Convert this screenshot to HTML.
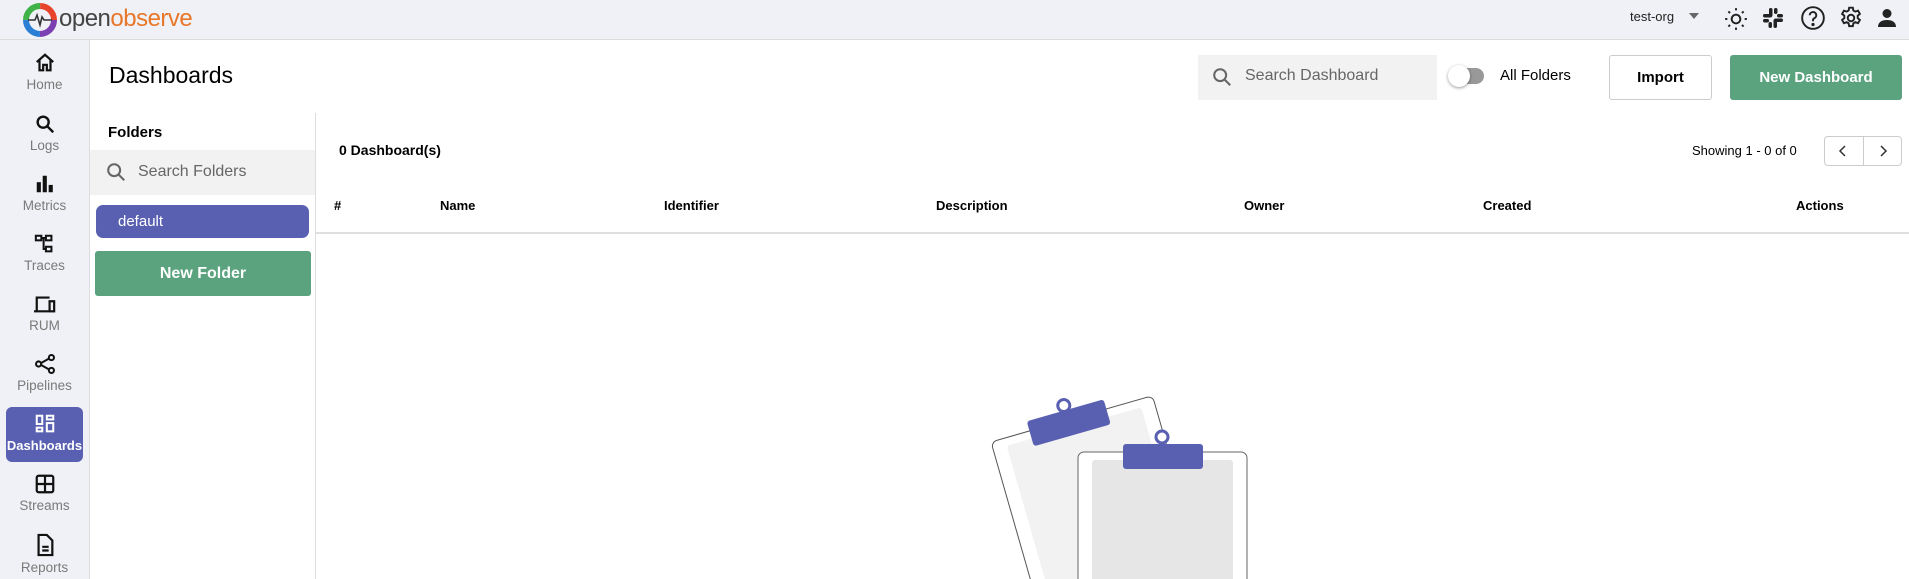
<!DOCTYPE html>
<html><head><meta charset="utf-8"><style>
*{margin:0;padding:0;box-sizing:border-box}
body{width:1909px;height:579px;overflow:hidden;background:#fff;font-family:"Liberation Sans",sans-serif;position:relative;color:#000}
.a{position:absolute}
.hdr{left:0;top:0;width:1909px;height:40px;background:#f0f1f6;border-bottom:1px solid #ddd}
.side{left:0;top:40px;width:90px;height:539px;background:#f0f1f6;border-right:1px solid #ddd}
.nav{position:absolute;left:6px;width:77px;text-align:center;font-size:13.5px;color:#7a7a7a}
.nav svg{display:block;margin:0 auto 3px}
.th{position:absolute;top:198px;font-size:13px;font-weight:bold}
</style></head><body>
<div class="a hdr"></div>
<svg class="a" style="left:22px;top:2px" width="36" height="36" viewBox="0 0 36 36">
<circle cx="18" cy="18" r="14" fill="none" stroke="#7b3fb2" stroke-width="6" stroke-dasharray="22 66"/>
<circle cx="18" cy="18" r="14" fill="none" stroke="#2a7fd4" stroke-width="6" stroke-dasharray="22 66" stroke-dashoffset="-22"/>
<circle cx="18" cy="18" r="14" fill="none" stroke="#3fb24a" stroke-width="6" stroke-dasharray="22 66" stroke-dashoffset="-44"/>
<circle cx="18" cy="18" r="14" fill="none" stroke="#e8442c" stroke-width="6" stroke-dasharray="22 66" stroke-dashoffset="-66"/>
<path d="M6 18h7l2-5 3 10 2-8 2 3h8" fill="none" stroke="#333" stroke-width="1.6"/>
</svg>
<div class="a" style="left:59px;top:5px;font-size:24px;color:#444;letter-spacing:-0.5px">open<span style="color:#e8772a">observe</span></div>
<div class="a" style="left:1630px;top:9px;font-size:13px;color:#222">test-org</div>
<div class="a" style="left:1689px;top:13px;width:0;height:0;border-left:5px solid transparent;border-right:5px solid transparent;border-top:6px solid #666"></div>
<svg class="a" style="left:1723px;top:6px" width="26" height="26" viewBox="0 0 24 24" fill="none" stroke="#222" stroke-width="1.8"><circle cx="12" cy="12" r="4"/><path d="M12 2v2M12 20v2M2 12h2M20 12h2M5 5l1.5 1.5M17.5 17.5L19 19M5 19l1.5-1.5M17.5 6.5L19 5"/></svg>
<svg class="a" style="left:1762px;top:7px" width="22" height="22" viewBox="0 0 22 22" fill="#222"><rect x="7" y="1" width="3.5" height="9" rx="1.7"/><rect x="1" y="7" width="9" height="3.5" rx="1.7"/><rect x="11.5" y="12" width="3.5" height="9" rx="1.7"/><rect x="12" y="11.5" width="9" height="3.5" rx="1.7"/><rect x="12" y="1" width="3.5" height="6" rx="1.7"/><rect x="15" y="7" width="6" height="3.5" rx="1.7"/><rect x="6.5" y="15" width="3.5" height="6" rx="1.7"/><rect x="1" y="12" width="6" height="3.5" rx="1.7"/></svg>
<svg class="a" style="left:1800px;top:5px" width="26" height="26" viewBox="0 0 24 24" fill="none" stroke="#222" stroke-width="1.8"><circle cx="12" cy="12" r="10"/><path d="M9 9.5a3 3 0 1 1 4 2.8c-.8.4-1 1-1 2V15"/><circle cx="12" cy="18" r=".6" fill="#222"/></svg>
<svg class="a" style="left:1838px;top:5px" width="26" height="26" viewBox="0 0 24 24" fill="none" stroke="#222" stroke-width="1.8"><circle cx="12" cy="12" r="3"/><path d="M10.3 2.5h3.4l.5 2.6 1.8 1 2.5-.9 1.7 3-2 1.7v2.2l2 1.7-1.7 3-2.5-.9-1.8 1-.5 2.6h-3.4l-.5-2.6-1.8-1-2.5.9-1.7-3 2-1.7V9.9l-2-1.7 1.7-3 2.5.9 1.8-1z"/></svg>
<svg class="a" style="left:1875px;top:6px" width="24" height="24" viewBox="0 0 24 24" fill="#222"><circle cx="12" cy="7.5" r="4.5"/><path d="M3 21c0-5 4-7 9-7s9 2 9 7z"/></svg>

<div class="a side"></div>
<div class="nav" style="top:52px"><svg width="22" height="22" viewBox="0 0 24 24" fill="none" stroke="#111" stroke-width="2.4"><path d="M3 11l9-8 9 8M6 9v11h4v-6h4v6h4V9"/></svg>Home</div>
<div class="nav" style="top:113px"><svg width="22" height="22" viewBox="0 0 24 24" fill="none" stroke="#111" stroke-width="2.6"><circle cx="10" cy="10" r="6"/><path d="M14.5 14.5L21 21"/></svg>Logs</div>
<div class="nav" style="top:173px"><svg width="22" height="22" viewBox="0 0 24 24" fill="#111"><rect x="3" y="10" width="4.5" height="11"/><rect x="9.5" y="3" width="4.5" height="18"/><rect x="16" y="13" width="4.5" height="8"/></svg>Metrics</div>
<div class="nav" style="top:233px"><svg width="22" height="22" viewBox="0 0 24 24" fill="none" stroke="#111" stroke-width="2.2"><rect x="2" y="3" width="6" height="5"/><rect x="13" y="3" width="6" height="5"/><rect x="13" y="15" width="6" height="5"/><path d="M8 5.5h5M10.5 5.5v12h2.5"/></svg>Traces</div>
<div class="nav" style="top:293px"><svg width="24" height="22" viewBox="0 0 26 24" fill="none" stroke="#111" stroke-width="2.4"><path d="M4 19V5h14M1 20h16"/><rect x="18" y="9" width="5" height="11"/></svg>RUM</div>
<div class="nav" style="top:353px"><svg width="22" height="22" viewBox="0 0 24 24" fill="none" stroke="#111" stroke-width="2.2"><circle cx="5" cy="12" r="2.8"/><circle cx="19" cy="5" r="2.8"/><circle cx="19" cy="19" r="2.8"/><path d="M7.5 11L16.5 6M7.5 13l9 5"/></svg>Pipelines</div>
<div class="a" style="left:6px;top:407px;width:77px;height:55px;background:#5960b2;border-radius:6px"></div>
<div class="nav" style="top:413px;color:#fff;font-weight:bold;font-size:13px;left:3px;width:83px"><svg width="22" height="22" viewBox="0 0 24 24" fill="none" stroke="#fff" stroke-width="2.2"><rect x="3" y="3" width="6" height="9"/><rect x="14" y="3" width="7" height="4"/><rect x="3" y="16" width="6" height="4"/><rect x="14" y="11" width="7" height="9"/></svg>Dashboards</div>
<div class="nav" style="top:473px"><svg width="22" height="22" viewBox="0 0 24 24" fill="none" stroke="#111" stroke-width="2.4"><rect x="3" y="3" width="18" height="18" rx="2"/><path d="M12 3v18M3 12h18"/></svg>Streams</div>
<div class="nav" style="top:533px"><svg width="22" height="24" viewBox="0 0 24 26" fill="none" stroke="#111" stroke-width="2.4"><path d="M5 2h9l6 6v16H5z"/><path d="M9 15h7M9 19h7"/></svg>Reports</div>

<div class="a" style="left:109px;top:62px;font-size:23px">Dashboards</div>
<div class="a" style="left:1198px;top:55px;width:239px;height:45px;background:#f2f2f2"></div>
<svg class="a" style="left:1211px;top:66px" width="22" height="22" viewBox="0 0 24 24" fill="none" stroke="#666" stroke-width="2.2"><circle cx="10" cy="10" r="6.5"/><path d="M15 15l6 6"/></svg>
<div class="a" style="left:1245px;top:67px;font-size:16px;color:#666">Search Dashboard</div>
<div class="a" style="left:1451px;top:68px;width:33px;height:16px;border-radius:8px;background:#999"></div>
<div class="a" style="left:1448px;top:65px;width:22px;height:22px;border-radius:50%;background:#fff;box-shadow:0 1px 3px rgba(0,0,0,.4)"></div>
<div class="a" style="left:1500px;top:67px;font-size:15px">All Folders</div>
<div class="a" style="left:1609px;top:55px;width:103px;height:45px;border:1px solid #ccc;border-radius:3px;text-align:center;line-height:43px;font-size:15px;font-weight:bold">Import</div>
<div class="a" style="left:1730px;top:55px;width:172px;height:45px;background:#5ba37f;border-radius:3px;text-align:center;line-height:45px;font-size:15px;font-weight:bold;color:#fff">New Dashboard</div>

<div class="a" style="left:315px;top:113px;width:1px;height:466px;background:#ddd"></div>
<div class="a" style="left:108px;top:124px;font-size:15px;font-weight:bold">Folders</div>
<div class="a" style="left:90px;top:150px;width:225px;height:45px;background:#f2f2f2"></div>
<svg class="a" style="left:105px;top:161px" width="22" height="22" viewBox="0 0 24 24" fill="none" stroke="#666" stroke-width="2.2"><circle cx="10" cy="10" r="6.5"/><path d="M15 15l6 6"/></svg>
<div class="a" style="left:138px;top:163px;font-size:16px;color:#666">Search Folders</div>
<div class="a" style="left:96px;top:205px;width:213px;height:33px;background:#5960b2;border-radius:7px;color:#fff;font-size:15px;line-height:33px;padding-left:22px">default</div>
<div class="a" style="left:95px;top:251px;width:216px;height:45px;background:#5ba37f;border-radius:3px;color:#fff;font-size:16px;font-weight:bold;text-align:center;line-height:45px">New Folder</div>

<div class="a" style="left:339px;top:142px;font-size:14px;font-weight:bold">0 Dashboard(s)</div>
<div class="a" style="left:1692px;top:143px;font-size:13px">Showing 1 - 0 of 0</div>
<div class="a" style="left:1824px;top:136px;width:78px;height:30px;border:1px solid #ccc;border-radius:4px"></div>
<div class="a" style="left:1863px;top:136px;width:1px;height:30px;background:#ccc"></div>
<svg class="a" style="left:1838px;top:145px" width="10" height="12" viewBox="0 0 10 12" fill="none" stroke="#333" stroke-width="1.5"><path d="M7 1L2 6l5 5"/></svg>
<svg class="a" style="left:1878px;top:145px" width="10" height="12" viewBox="0 0 10 12" fill="none" stroke="#333" stroke-width="1.5"><path d="M3 1l5 5-5 5"/></svg>
<div class="th" style="left:334px">#</div>
<div class="th" style="left:440px">Name</div>
<div class="th" style="left:664px">Identifier</div>
<div class="th" style="left:936px">Description</div>
<div class="th" style="left:1244px">Owner</div>
<div class="th" style="left:1483px">Created</div>
<div class="th" style="left:1796px">Actions</div>
<div class="a" style="left:316px;top:232px;width:1593px;height:2px;background:#e0e0e0"></div>

<svg class="a" style="left:0;top:0" width="1909" height="579">
<g transform="translate(991,442) rotate(-16)">
<rect x="0" y="0" width="168" height="200" rx="6" fill="#fff" stroke="#555" stroke-width="1"/>
<rect x="14" y="8" width="140" height="200" rx="3" fill="#f2f2f2"/>
<rect x="40" y="-10" width="80" height="26" rx="3" fill="#5960b2"/>
<circle cx="80" cy="-15" r="6" fill="none" stroke="#5960b2" stroke-width="3"/>
</g>
<rect x="1078" y="452" width="169" height="140" rx="6" fill="#fff" stroke="#666" stroke-width="1"/>
<rect x="1092" y="460" width="141" height="130" rx="3" fill="#e6e6e6"/>
<rect x="1123" y="444" width="80" height="25" rx="3" fill="#5960b2"/>
<circle cx="1162" cy="437" r="6" fill="#fff" stroke="#5960b2" stroke-width="3"/>
</svg>
</body></html>
